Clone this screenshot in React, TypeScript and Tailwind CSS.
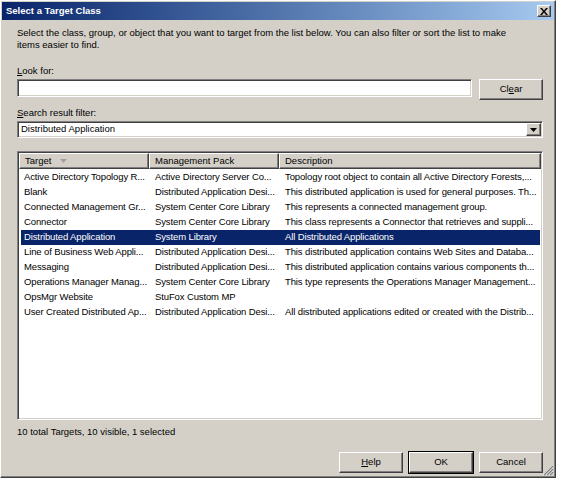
import React from 'react';

interface Row {
    target: string;
    pack: string;
    desc: string;
    selected?: boolean;
}

const rows: Row[] = [
    { target: 'Active Directory Topology R...', pack: 'Active Directory Server Co...', desc: 'Topology root object to contain all Active Directory Forests,...' },
    { target: 'Blank', pack: 'Distributed Application Desi...', desc: 'This distributed application is used for general purposes. Th...' },
    { target: 'Connected Management Gr...', pack: 'System Center Core Library', desc: 'This represents a connected management group.' },
    { target: 'Connector', pack: 'System Center Core Library', desc: 'This class represents a Connector that retrieves and suppli...' },
    { target: 'Distributed Application', pack: 'System Library', desc: 'All Distributed Applications', selected: true },
    { target: 'Line of Business Web Appli...', pack: 'Distributed Application Desi...', desc: 'This distributed application contains Web Sites and Databa...' },
    { target: 'Messaging', pack: 'Distributed Application Desi...', desc: 'This distributed application contains various components th...' },
    { target: 'Operations Manager Manag...', pack: 'System Center Core Library', desc: 'This type represents the Operations Manager Management...' },
    { target: 'OpsMgr Website', pack: 'StuFox Custom MP', desc: '' },
    { target: 'User Created Distributed Ap...', pack: 'Distributed Application Desi...', desc: 'All distributed applications edited or created with the Distrib...' },
];

// classic raised 3D border
const raised = 'border border-t-white border-l-white border-r-[#404040] border-b-[#404040] shadow-[inset_-1px_-1px_0_#808080]';
const sunken = 'border border-t-[#808080] border-l-[#808080] border-r-white border-b-white shadow-[inset_1px_1px_0_#404040,inset_-1px_-1px_0_#d4d0c8]';

const Button: React.FC<{ children: React.ReactNode; isDefault?: boolean; className?: string }> = ({ children, isDefault, className = '' }) => (
    <div className={`${isDefault ? 'outline outline-1 outline-black' : ''} ${className}`}>
        <div className={`${raised} h-full w-full bg-[#d4d0c8] flex items-center justify-center text-black`}>{children}</div>
    </div>
);

const App: React.FC = () => {
    return (
        <div className="w-[562px] h-[484px] bg-white text-[9.5px] text-black" style={{ fontFamily: '"Liberation Sans", Arial, sans-serif' }}>
            <div className={`w-[556px] h-[478px] bg-[#d4d0c8] ${raised} p-px flex flex-col shadow-[inset_-1px_-1px_0_#808080,5px_5px_4px_rgba(0,0,0,0.45)]`}>
                {/* title bar */}
                <div className="h-[18px] bg-gradient-to-r from-[#0a246a] to-[#a6caf0] flex items-center justify-between pl-[4px] pr-[3px]">
                    <span className="text-white font-bold text-[9.5px]">Select a Target Class</span>
                    <div className={`${raised} bg-[#d4d0c8] w-[14px] h-[12px] flex items-center justify-center`}>
                        <svg width="8" height="7" viewBox="0 0 8 7">
                            <path d="M0 0h2l2 2.5L6 0h2L5 3.5 8 7H6L4 4.5 2 7H0l3-3.5z" fill="#000" />
                        </svg>
                    </div>
                </div>

                <div className="flex-1 flex flex-col pl-[15px] pr-[11px] relative">
                    <p className="mt-[7px] leading-[12px] pr-[20px]">
                        Select the class, group, or object that you want to target from the list below. You can also filter or sort the list to make items easier to find.
                    </p>

                    <div className="mt-[14px] leading-[12px]"><u>L</u>ook for:</div>
                    <div className="mt-[2px] flex gap-[7px] items-start">
                        <div className={`${sunken} bg-white h-[18px] flex-1`} />
                        <Button className="w-[64px] h-[21px]">Cl<u>e</u>ar</Button>
                    </div>

                    <div className="mt-[7px] leading-[12px]"><u>S</u>earch result filter:</div>
                    <div className={`${sunken} mt-[2px] bg-white h-[17px] flex items-center pl-[3px] pr-[1px]`}>
                        <span className="flex-1">Distributed Application</span>
                        <div className={`${raised} bg-[#d4d0c8] w-[15px] h-[13px] flex items-center justify-center`}>
                            <svg width="7" height="4" viewBox="0 0 7 4"><path d="M0 0h7L3.5 4z" fill="#000" /></svg>
                        </div>
                    </div>

                    {/* list view */}
                    <div className={`${sunken} mt-[13px] bg-white h-[269px] p-px flex flex-col`}>
                        <div className="flex h-[16px] bg-[#d4d0c8] shrink-0">
                            <div className={`${raised} w-[130px] shrink-0 flex items-center pl-[5px] gap-[9px]`}>
                                Target
                                <svg width="7" height="4" viewBox="0 0 7 4"><path d="M0 0h7L3.5 4z" fill="#a0a0a0" /></svg>
                            </div>
                            <div className={`${raised} w-[130px] shrink-0 flex items-center pl-[5px]`}>Management Pack</div>
                            <div className={`${raised} flex-1 flex items-center pl-[5px]`}>Description</div>
                        </div>
                        <div className="flex flex-col pt-px tracking-[-0.12px]">
                            {rows.map((r) => (
                                <div key={r.target} className={`flex h-[15px] items-center ml-[2px] mr-px ${r.selected ? 'bg-[#0a246a] text-white' : ''}`}>
                                    <div className="w-[129px] shrink-0 pl-[3px] whitespace-nowrap overflow-hidden">{r.target}</div>
                                    <div className="w-[130px] shrink-0 pl-[5px] whitespace-nowrap overflow-hidden">{r.pack}</div>
                                    <div className="flex-1 min-w-0 pl-[5px] whitespace-nowrap overflow-hidden">{r.desc}</div>
                                </div>
                            ))}
                        </div>
                    </div>

                    <div className="mt-[6px] leading-[12px]">10 total Targets, 10 visible, 1 selected</div>

                    <div className="mt-auto mb-[3px] flex justify-end gap-[6px]">
                        <Button className="w-[64px] h-[21px]"><u>H</u>elp</Button>
                        <Button isDefault className="w-[64px] h-[21px]">OK</Button>
                        <Button className="w-[64px] h-[21px]">Cancel</Button>
                    </div>

                    {/* resize grip */}
                    <svg className="absolute right-0 bottom-0" width="12" height="12" viewBox="0 0 12 12">
                        <path d="M11 1L1 11M11 4L4 11M11 7L7 11" stroke="#ffffff" strokeWidth="1" />
                        <path d="M11 2L2 11M11 5L5 11M11 8L8 11" stroke="#808080" strokeWidth="1.2" />
                    </svg>
                </div>
            </div>
        </div>
    );
};

export default App;
